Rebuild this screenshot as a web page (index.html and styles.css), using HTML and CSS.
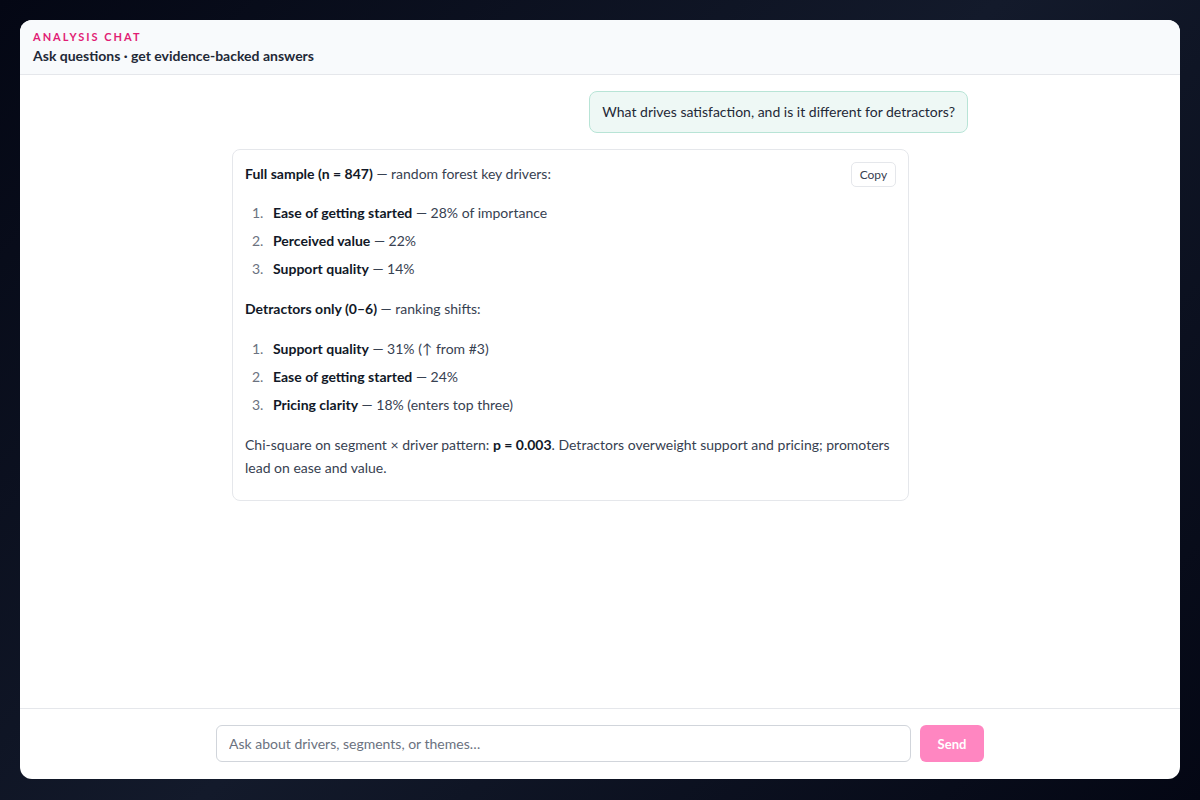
FILE: index.html
```html
<!DOCTYPE html>
<html lang="en">
<head>
<meta charset="utf-8">
<title>Analysis Chat</title>
<link rel="stylesheet" href="styles.css">
</head>
<body>
<div class="app">
  <header class="header">
    <div class="eyebrow">ANALYSIS CHAT</div>
    <div class="title">Ask questions · get evidence-backed answers</div>
  </header>
  <main class="messages">
    <div class="column">
      <div class="msg user">What drives satisfaction, and is it different for detractors?</div>
      <div class="msg assistant">
        <button class="copy">Copy</button>
        <p><strong>Full sample (n = 847)</strong> — random forest key drivers:</p>
        <ol>
          <li><strong>Ease of getting started</strong> — 28% of importance</li>
          <li><strong>Perceived value</strong> — 22%</li>
          <li><strong>Support quality</strong> — 14%</li>
        </ol>
        <p><strong>Detractors only (0–6)</strong> — ranking shifts:</p>
        <ol>
          <li><strong>Support quality</strong> — 31% (↑ from #3)</li>
          <li><strong>Ease of getting started</strong> — 24%</li>
          <li><strong>Pricing clarity</strong> — 18% (enters top three)</li>
        </ol>
        <p>Chi-square on segment × driver pattern: <strong>p = 0.003</strong>. Detractors overweight support and pricing; promoters lead on ease and value.</p>
      </div>
    </div>
  </main>
  <footer class="composer">
    <form class="form">
      <input class="input" type="text" placeholder="Ask about drivers, segments, or themes…">
      <button class="send" type="button">Send</button>
    </form>
  </footer>
</div>
</body>
</html>
```
FILE: styles.css
```css
* { box-sizing: border-box; }
html, body { height: 100%; }
body {
  margin: 0;
  padding: 20px;
  font-family: Lato, "Noto Sans", sans-serif;
  background: linear-gradient(135deg, #040714 0%, #131a2b 50%, #040714 100%);
  color: #1f2937;
}
.app {
  height: 759px;
  background: #fff;
  border-radius: 12px;
  overflow: hidden;
  display: flex;
  flex-direction: column;
}
.header {
  background: #f8fafc;
  border-bottom: 1px solid #e5e7eb;
  padding: 10px 12px 10px 13px;
  height: 55px;
  flex: none;
}
.eyebrow {
  font-size: 11px;
  font-weight: 700;
  letter-spacing: 2px;
  color: #e11d74;
  line-height: 14px;
}
.title {
  font-size: 14px;
  font-weight: 700;
  color: #1f2937;
  line-height: 20px;
  margin-top: 2px;
}
.messages {
  flex: 1;
  overflow: auto;
  padding: 16px 0;
}
.column {
  max-width: 768px;
  margin: 0 auto;
  padding: 0 16px;
  display: flex;
  flex-direction: column;
  gap: 16px;
}
.msg {
  font-size: 14px;
  line-height: 22.4px;
}
.user {
  align-self: flex-end;
  max-width: 80%;
  background: #eef8f5;
  border: 1px solid #b8e4d6;
  border-radius: 8px;
  padding: 9px 12px;
  color: #1f2937;
}
.assistant {
  position: relative;
  align-self: flex-start;
  width: 92%;
  border: 1px solid #e5e7eb;
  border-radius: 8px;
  padding: 12px 12px 21px;
  color: #374151;
  line-height: 23px;
}
.assistant p { margin: 0; }
.assistant strong { color: #111827; font-weight: 700; }
.assistant ol {
  margin: 17px 0;
  padding-left: 22px;
  display: flex;
  flex-direction: column;
  gap: 5px;
}
.assistant ol:first-of-type { margin-top: 16px; }
.assistant li { padding-left: 6px; }
.assistant li::marker { color: #6b7280; }
.copy {
  position: absolute;
  top: 12px;
  right: 12px;
  font-family: Lato, "Noto Sans", sans-serif;
  font-size: 12px;
  color: #374151;
  background: #fff;
  border: 1px solid #e5e7eb;
  border-radius: 5px;
  padding: 0 8px;
  height: 25px;
  line-height: 23px;
}
.composer {
  flex: none;
  border-top: 1px solid #e5e7eb;
  padding: 16px 0 17px;
}
.form {
  max-width: 768px;
  margin: 0 auto;
  display: flex;
  gap: 9px;
}
.input {
  flex: 1;
  height: 37px;
  border: 1px solid #d1d5db;
  border-radius: 6px;
  padding: 0 12px;
  font-family: Lato, "Noto Sans", sans-serif;
  font-size: 14px;
  color: #1f2937;
}
.input::placeholder { color: #6b7280; }
.send {
  width: 64px;
  height: 37px;
  border: none;
  border-radius: 6px;
  background: #ff86c1;
  color: #fff;
  font-family: Lato, "Noto Sans", sans-serif;
  font-size: 13px;
  font-weight: 700;
}
```
